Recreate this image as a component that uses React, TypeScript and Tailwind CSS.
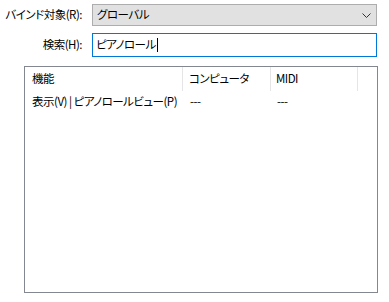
export default function App() {
  const font = { fontFamily: '"Noto Sans CJK JP", "Noto Sans", sans-serif' }
  return (
    <div
      className="w-[389px] h-[302px] bg-white text-[11.5px] text-black leading-none whitespace-nowrap tracking-[-0.5px] [font-feature-settings:'palt']"
      style={font}
    >
      <div className="flex items-center pt-[4px]">
        <div className="w-[92px] pr-[10px] flex justify-end">バインド対象(R):</div>
        <div className="w-[285px] h-[22px] flex items-center justify-between bg-[#e1e1e1] border border-[#adadad] pl-[4px] pr-[5px]">
          <span>グローバル</span>
          <svg width="9" height="5" viewBox="0 0 9 5" fill="none">
            <path d="M0.5 0.5 L4.5 4.5 L8.5 0.5" stroke="#333" strokeWidth="1" />
          </svg>
        </div>
      </div>
      <div className="flex items-center mt-[7px]">
        <div className="w-[92px] pr-[10px] flex justify-end">検索(H):</div>
        <div className="w-[285px] h-[24px] flex items-center border border-[#0078d7] pl-[3px]">
          <span>ピアノロール</span>
          <span className="w-px h-[14px] bg-black ml-[1px]" />
        </div>
      </div>
      <div className="ml-[24px] mt-[9px] w-[354px] h-[227px] border border-[#828790]">
        <div className="flex h-[24px]">
          <div className="w-[158px] pl-[7px] flex items-center border-r border-[#e5e5e5]">機能</div>
          <div className="w-[88px] pl-[6px] flex items-center border-r border-[#e5e5e5]">コンピュータ</div>
          <div className="w-[87px] pl-[5px] flex items-center border-r border-[#e5e5e5]">MIDI</div>
        </div>
        <div className="flex h-[21px] items-center">
          <div className="w-[159px] pl-[7px]">表示(V) | ピアノロールビュー(P)</div>
          <div className="w-[88px] pl-[6px]">---</div>
          <div className="w-[87px] pl-[5px]">---</div>
        </div>
      </div>
    </div>
  )
}
